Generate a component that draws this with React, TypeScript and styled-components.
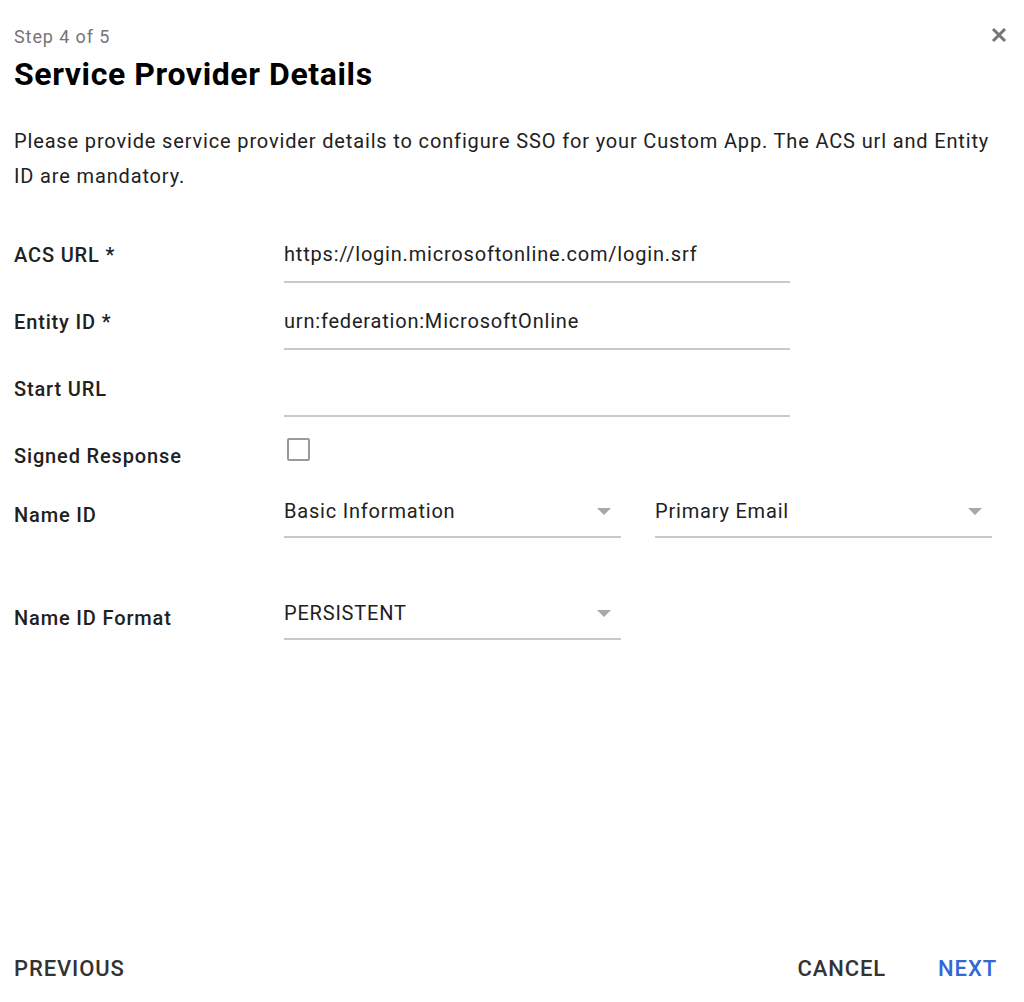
import * as React from 'react';
import styled, {createGlobalStyle} from 'styled-components';

const GlobalStyle = createGlobalStyle`
    html, body {
        margin: 0;
        padding: 0;
        background: #ffffff;
    }
    body {
        font-family: Roboto, "Liberation Sans", Arial, sans-serif;
        color: #212121;
    }
`;

const Page = styled.div`
    display: flex;
    flex-direction: column;
    min-height: 1002px;
    box-sizing: border-box;
    padding: 25px 27px 0 14px;
    position: relative;
`;

const Header = styled.div`
    display: flex;
    flex-direction: column;
    gap: 5px;
`;

const StepText = styled.div`
    font-size: 18px;
    line-height: 24px;
    letter-spacing: 0.9px;
    color: #757575;
`;

const Title = styled.h1`
    margin: 0;
    font-size: 32px;
    line-height: 40px;
    font-weight: 700;
    letter-spacing: 0.6px;
    color: #000000;
`;

const CloseButton = styled.button`
    position: absolute;
    top: 25px;
    right: 15px;
    width: 20px;
    height: 20px;
    padding: 0;
    border: none;
    background: transparent;
    display: flex;
    align-items: center;
    justify-content: center;
    cursor: pointer;
`;

const Description = styled.p`
    margin: 30px 0 0;
    font-size: 20px;
    line-height: 35px;
    letter-spacing: 0.85px;
    color: #212121;
    max-width: 992px;
`;

const Form = styled.div`
    display: flex;
    flex-direction: column;
    margin-top: 48px;
`;

const Row = styled.div<{$gap: number}>`
    display: grid;
    grid-template-columns: 270px 1fr;
    align-items: start;
    margin-bottom: ${({$gap}) => $gap}px;
`;

const Label = styled.div<{$offset?: number}>`
    font-size: 20px;
    line-height: 24px;
    font-weight: 500;
    letter-spacing: 0.85px;
    color: #212121;
    margin-top: ${({$offset}) => $offset || 1}px;
`;

const TextField = styled.div`
    width: 506px;
    height: 41px;
    box-sizing: border-box;
    padding-bottom: 15px;
    border-bottom: 2px solid #c9c9c9;
    font-size: 20px;
    line-height: 24px;
    letter-spacing: 0.8px;
    color: #212121;
`;

const SelectGroup = styled.div`
    display: flex;
    gap: 34px;
`;

const Select = styled.div`
    width: 337px;
    height: 39px;
    box-sizing: border-box;
    display: flex;
    align-items: flex-start;
    justify-content: space-between;
    border-bottom: 2px solid #c9c9c9;
    font-size: 20px;
    line-height: 24px;
    letter-spacing: 0.8px;
    color: #212121;
`;

const Arrow = styled.span`
    width: 0;
    height: 0;
    margin: 9px 10px 0 0;
    border-left: 7px solid transparent;
    border-right: 7px solid transparent;
    border-top: 7px solid #a8a8a8;
`;

const Checkbox = styled.span`
    display: block;
    width: 23px;
    height: 23px;
    box-sizing: border-box;
    margin: -5px 0 0 3px;
    border: 2px solid #9a9a9a;
    border-radius: 2px;
`;

const Footer = styled.div`
    margin-top: auto;
    display: flex;
    align-items: center;
    height: 66px;
    padding-bottom: 1px;
`;

const Spacer = styled.div`
    flex: 1;
`;

const FooterButton = styled.button<{$primary?: boolean}>`
    border: none;
    background: transparent;
    padding: 0;
    font-family: inherit;
    font-size: 22px;
    font-weight: 500;
    letter-spacing: 0.9px;
    color: ${({$primary}) => ($primary ? '#3367d6' : '#333333')};
    cursor: pointer;
    & + & {
        margin-left: 52px;
    }
`;

const FieldRow = ({label, value}: {label: string; value?: string}) => (
    <Row $gap={26}>
        <Label>{label}</Label>
        <TextField>{value}</TextField>
    </Row>
);

const App = () => {
    return (
        <Page>
            <GlobalStyle />
            <Header>
                <StepText>Step 4 of 5</StepText>
                <Title>Service Provider Details</Title>
            </Header>
            <CloseButton aria-label="Close">
                <svg width="16" height="16" viewBox="0 0 16 16">
                    <path d="M2 2 L14 14 M14 2 L2 14" stroke="#757575" strokeWidth="3" strokeLinecap="butt" />
                </svg>
            </CloseButton>
            <Description>
                Please provide service provider details to configure SSO for your Custom App. The ACS url and Entity ID are mandatory.
            </Description>
            <Form>
                <FieldRow label="ACS URL *" value="https://login.microsoftonline.com/login.srf" />
                <FieldRow label="Entity ID *" value="urn:federation:MicrosoftOnline" />
                <FieldRow label="Start URL" />
                <Row $gap={31}>
                    <Label>Signed Response</Label>
                    <Checkbox />
                </Row>
                <Row $gap={63}>
                    <Label $offset={4}>Name ID</Label>
                    <SelectGroup>
                        <Select>
                            Basic Information
                            <Arrow />
                        </Select>
                        <Select>
                            Primary Email
                            <Arrow />
                        </Select>
                    </SelectGroup>
                </Row>
                <Row $gap={0}>
                    <Label $offset={5}>Name ID Format</Label>
                    <Select>
                        PERSISTENT
                        <Arrow />
                    </Select>
                </Row>
            </Form>
            <Footer>
                <FooterButton>PREVIOUS</FooterButton>
                <Spacer />
                <FooterButton>CANCEL</FooterButton>
                <FooterButton $primary>NEXT</FooterButton>
            </Footer>
        </Page>
    );
};

export default App;
